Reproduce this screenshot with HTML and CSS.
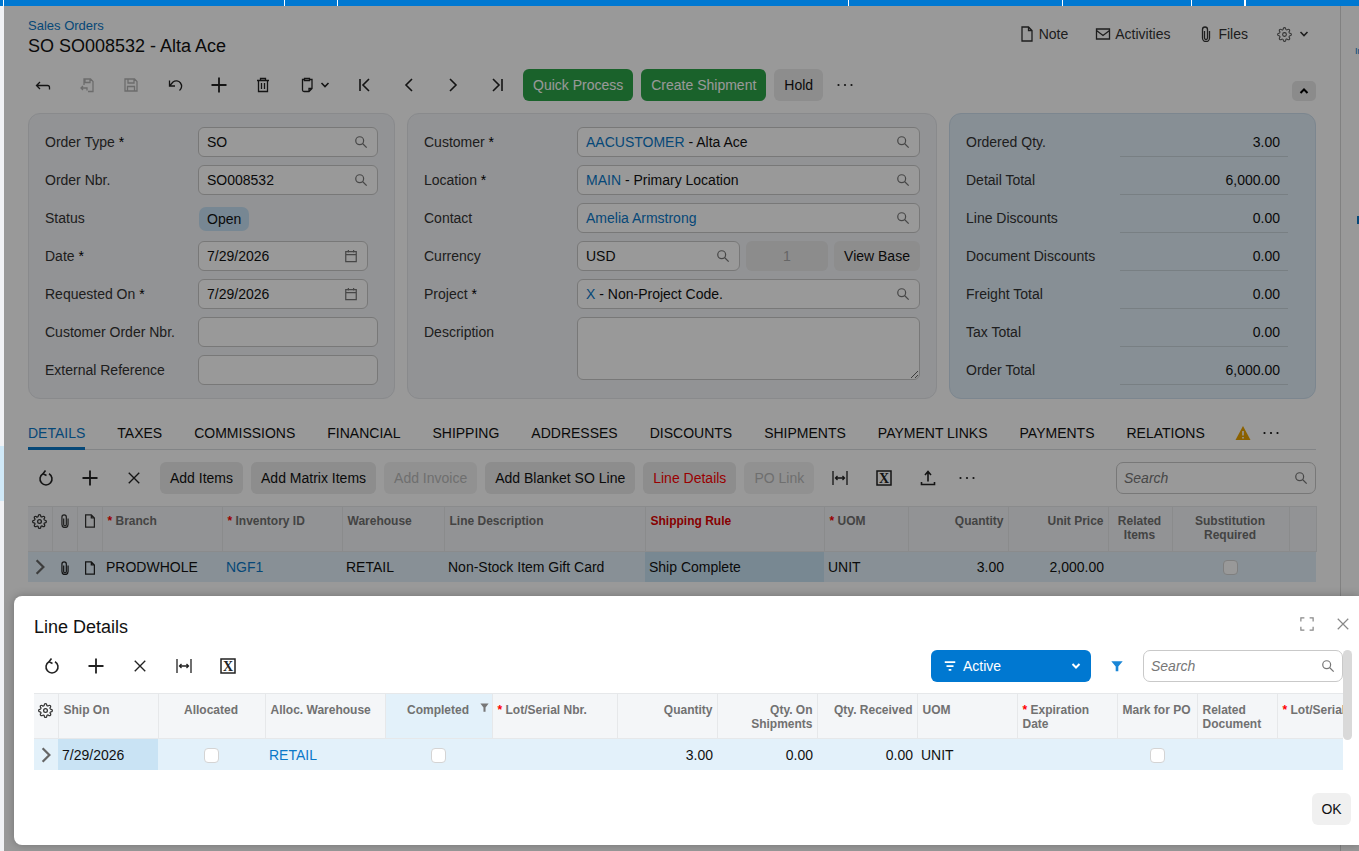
FILE: index.html
```html
<!DOCTYPE html>
<html lang="en">
<head>
    <meta charset="UTF-8">
    <title>SO SO008532 - Alta Ace</title>
    <link rel="stylesheet" href="styles.css">
</head>
<body>
    <svg class="sprite" xmlns="http://www.w3.org/2000/svg">
        <symbol id="i-back" viewBox="0 0 16 16"><path d="M14.5 12.5v-2a2 2 0 0 0-2-2h-11M5 5 1.5 8.5 5 12"/></symbol>
        <symbol id="i-saveback" viewBox="0 0 16 16"><path d="M5 8V2h6.5L14 4.5V14.5H9M6 2v3.5h5V2M2 11h6v2.5M4 9l-2 2 2 2"/></symbol>
        <symbol id="i-save" viewBox="0 0 16 16"><path d="M2 2h9.5L14 4.5V14H2zM5 2v4h6V2M4.5 14V9.5h7V14"/></symbol>
        <symbol id="i-undo" viewBox="0 0 16 16"><path d="M2.5 3.5V9H8M2.5 9l3.5-4a5 5 0 1 1 6.5 8.5"/></symbol>
        <symbol id="i-plus" viewBox="0 0 16 16"><path d="M8 .5v15M.5 8h15"/></symbol>
        <symbol id="i-trash" viewBox="0 0 16 16"><path d="M2 3.5h12M5.5 3.5V1.5h5v2M3.5 3.5V14.5h9V3.5M6.5 6v6M9.5 6v6"/></symbol>
        <symbol id="i-paste" viewBox="0 0 16 16"><path d="M5.5 2.5H3.5V13a1.5 1.5 0 0 0 1.5 1.5h5l3-3V2.5h-2M5.5 1.5h5v2h-5zM10 14.5v-3h3"/></symbol>
        <symbol id="i-first" viewBox="0 0 16 16"><path d="M3 2v12M12 2 6 8l6 6"/></symbol>
        <symbol id="i-prev" viewBox="0 0 16 16"><path d="M11 2 5 8l6 6"/></symbol>
        <symbol id="i-next" viewBox="0 0 16 16"><path d="m5 2 6 6-6 6"/></symbol>
        <symbol id="i-last" viewBox="0 0 16 16"><path d="M13 2v12M4 2l6 6-6 6"/></symbol>
        <symbol id="i-dots" viewBox="0 0 16 16"><circle cx="1.5" cy="8" r="1.1" fill="currentColor" stroke="none"/><circle cx="8" cy="8" r="1.1" fill="currentColor" stroke="none"/><circle cx="14.5" cy="8" r="1.1" fill="currentColor" stroke="none"/></symbol>
        <symbol id="i-chev-down" viewBox="0 0 10 10"><path d="m1.5 3 3.5 3.5L8.5 3"/></symbol>
        <symbol id="i-chev-up" viewBox="0 0 10 10"><path d="M1.5 7 5 3.5 8.5 7"/></symbol>
        <symbol id="i-search" viewBox="0 0 16 16"><circle cx="6.5" cy="6.5" r="4.5"/><path d="m10 10 4.5 4.5"/></symbol>
        <symbol id="i-cal" viewBox="0 0 16 16"><path d="M2 3h12v11.5H2zM2 6.5h12M5 1v3M11 1v3"/></symbol>
        <symbol id="i-note" viewBox="0 0 16 16"><path d="M3 1h6.5L13 4.5V15H3zM9.5 1v3.5H13"/></symbol>
        <symbol id="i-mail" viewBox="0 0 16 16"><path d="M1.5 3h13v10h-13zM1.5 4.5 8 9.5l6.5-5"/></symbol>
        <symbol id="i-clip" viewBox="0 0 16 16"><path d="M6.5 5v7a1.5 1.5 0 0 0 3 0V3.5a2.5 2.5 0 0 0-5 0v8.500a3.5 3.5 0 0 0 7 0V5"/></symbol>
        <symbol id="i-gear" viewBox="0 0 24 24"><circle cx="12" cy="12" r="3"/><path d="M19.4 15a1.65 1.65 0 0 0 .33 1.82l.06.06a2 2 0 0 1 0 2.83 2 2 0 0 1-2.83 0l-.06-.06a1.65 1.65 0 0 0-1.82-.33 1.65 1.65 0 0 0-1 1.51V21a2 2 0 0 1-2 2 2 2 0 0 1-2-2v-.09A1.65 1.65 0 0 0 9 19.4a1.65 1.65 0 0 0-1.82.33l-.06.06a2 2 0 0 1-2.83 0 2 2 0 0 1 0-2.83l.06-.06a1.65 1.65 0 0 0 .33-1.82 1.65 1.65 0 0 0-1.51-1H3a2 2 0 0 1-2-2 2 2 0 0 1 2-2h.09A1.65 1.65 0 0 0 4.6 9a1.65 1.65 0 0 0-.33-1.82l-.06-.06a2 2 0 0 1 0-2.83 2 2 0 0 1 2.83 0l.06.06a1.65 1.65 0 0 0 1.82.33H9a1.65 1.65 0 0 0 1-1.51V3a2 2 0 0 1 2-2 2 2 0 0 1 2 2v.09a1.65 1.65 0 0 0 1 1.51 1.65 1.65 0 0 0 1.82-.33l.06-.06a2 2 0 0 1 2.83 0 2 2 0 0 1 0 2.83l-.06.06a1.65 1.65 0 0 0-.33 1.82V9a1.65 1.65 0 0 0 1.51 1H21a2 2 0 0 1 2 2 2 2 0 0 1-2 2h-.09a1.65 1.65 0 0 0-1.51 1z"/></symbol>
        <symbol id="i-refresh" viewBox="0 0 16 16"><path d="M5 3.8a6 6 0 1 0 6 0M7.5.5 5 3.8 8.5 5.5"/></symbol>
        <symbol id="i-x" viewBox="0 0 16 16"><path d="m2 2 12 12M14 2 2 14"/></symbol>
        <symbol id="i-fit" viewBox="0 0 16 16"><path d="M1 1v14M15 1v14M3.5 8h9M5.5 6l-2 2 2 2M10.5 6l2 2-2 2"/></symbol>
        <symbol id="i-upload" viewBox="0 0 16 16"><path d="M8 11.5V2M5 5l3-3.5L11 5M1.5 12v2.5h13V12"/></symbol>
        <symbol id="i-expand" viewBox="0 0 16 16"><path d="M1 5V1h4M11 1h4v4M15 11v4h-4M5 15H1v-4"/></symbol>
        <symbol id="i-excel" viewBox="0 0 16 16"><rect x="1" y="1" width="14" height="14"/><text x="8" y="12.8" text-anchor="middle" font-family="Liberation Serif" font-size="14" font-weight="bold" fill="currentColor" stroke="none">X</text></symbol>
        <symbol id="i-lines" viewBox="0 0 16 16"><path d="M2 3.5h12M4 8h8M6.5 12.5h3"/></symbol>
    </svg>

    <div class="topbar">
        <span class="seg seg-a"></span>
        <span class="seg seg-b"></span>
        <span class="seg seg-c"></span>
        <span class="seg seg-d"></span>
        <span class="seg seg-e"></span>
        <span class="seg seg-f"></span>
        <span class="seg seg-g"></span>
        <span class="seg seg-h"></span>
    </div>

    <div class="shell">
        <div class="edge"><span class="edge-item"></span></div>

        <main class="page">
            <header class="page-head">
                <div>
                    <a class="crumb">Sales Orders</a>
                    <h1 class="page-title">SO SO008532 - Alta Ace</h1>
                </div>
                <nav class="head-links">
                    <span class="head-link link-note"><svg class="ic"><use href="#i-note"/></svg>Note</span>
                    <span class="head-link link-act"><svg class="ic"><use href="#i-mail"/></svg>Activities</span>
                    <span class="head-link"><svg class="ic"><use href="#i-clip"/></svg>Files</span>
                    <span class="head-link head-gear"><svg class="ic gear-ic"><use href="#i-gear"/></svg><svg class="chev"><use href="#i-chev-down"/></svg></span>
                </nav>
            </header>

            <div class="toolbar main-toolbar">
                <span class="icon-btn"><svg class="ic"><use href="#i-back"/></svg></span>
                <span class="icon-btn off"><svg class="ic"><use href="#i-saveback"/></svg></span>
                <span class="icon-btn off"><svg class="ic"><use href="#i-save"/></svg></span>
                <span class="icon-btn"><svg class="ic"><use href="#i-undo"/></svg></span>
                <span class="icon-btn"><svg class="ic ic-plus"><use href="#i-plus"/></svg></span>
                <span class="icon-btn"><svg class="ic"><use href="#i-trash"/></svg></span>
                <span class="icon-btn paste-btn"><svg class="ic"><use href="#i-paste"/></svg><svg class="chev"><use href="#i-chev-down"/></svg></span>
                <span class="icon-btn"><svg class="ic ic-nav"><use href="#i-first"/></svg></span>
                <span class="icon-btn"><svg class="ic ic-nav"><use href="#i-prev"/></svg></span>
                <span class="icon-btn"><svg class="ic ic-nav"><use href="#i-next"/></svg></span>
                <span class="icon-btn"><svg class="ic ic-nav"><use href="#i-last"/></svg></span>
                <button class="btn btn-green first-btn">Quick Process</button>
                <button class="btn btn-green">Create Shipment</button>
                <button class="btn">Hold</button>
                <span class="icon-btn"><svg class="ic"><use href="#i-dots"/></svg></span>
                <span class="collapse-btn"><svg class="chev"><use href="#i-chev-up"/></svg></span>
            </div>

            <section class="panels">
                <div class="panel">
                    <div class="row"><label class="lbl">Order Type <b>*</b></label><div class="field"><span>SO</span><svg class="ic-s"><use href="#i-search"/></svg></div></div>
                    <div class="row"><label class="lbl">Order Nbr.</label><div class="field"><span>SO008532</span><svg class="ic-s"><use href="#i-search"/></svg></div></div>
                    <div class="row"><label class="lbl">Status</label><span class="pill">Open</span></div>
                    <div class="row"><label class="lbl">Date <b>*</b></label><div class="field field-date"><span>7/29/2026</span><svg class="ic-s"><use href="#i-cal"/></svg></div></div>
                    <div class="row"><label class="lbl">Requested On <b>*</b></label><div class="field field-date"><span>7/29/2026</span><svg class="ic-s"><use href="#i-cal"/></svg></div></div>
                    <div class="row"><label class="lbl">Customer Order Nbr.</label><div class="field"></div></div>
                    <div class="row"><label class="lbl">External Reference</label><div class="field"></div></div>
                </div>

                <div class="panel">
                    <div class="row"><label class="lbl">Customer <b>*</b></label><div class="field"><span><a class="link">AACUSTOMER</a> - Alta Ace</span><svg class="ic-s"><use href="#i-search"/></svg></div></div>
                    <div class="row"><label class="lbl">Location <b>*</b></label><div class="field"><span><a class="link">MAIN</a> - Primary Location</span><svg class="ic-s"><use href="#i-search"/></svg></div></div>
                    <div class="row"><label class="lbl">Contact</label><div class="field"><span><a class="link">Amelia Armstrong</a></span><svg class="ic-s"><use href="#i-search"/></svg></div></div>
                    <div class="row">
                        <label class="lbl">Currency</label>
                        <div class="currency">
                            <div class="field"><span>USD</span><svg class="ic-s"><use href="#i-search"/></svg></div>
                            <div class="rate">1</div>
                            <button class="btn view-base">View Base</button>
                        </div>
                    </div>
                    <div class="row"><label class="lbl">Project <b>*</b></label><div class="field"><span><a class="link">X</a> - Non-Project Code.</span><svg class="ic-s"><use href="#i-search"/></svg></div></div>
                    <div class="row row-top"><label class="lbl">Description</label><textarea class="area"></textarea></div>
                </div>

                <div class="panel panel-blue">
                    <div class="row"><label class="lbl">Ordered Qty.</label><div class="amount">3.00</div></div>
                    <div class="row"><label class="lbl">Detail Total</label><div class="amount">6,000.00</div></div>
                    <div class="row"><label class="lbl">Line Discounts</label><div class="amount">0.00</div></div>
                    <div class="row"><label class="lbl">Document Discounts</label><div class="amount">0.00</div></div>
                    <div class="row"><label class="lbl">Freight Total</label><div class="amount">0.00</div></div>
                    <div class="row"><label class="lbl">Tax Total</label><div class="amount">0.00</div></div>
                    <div class="row"><label class="lbl">Order Total</label><div class="amount">6,000.00</div></div>
                </div>
            </section>

            <div class="tabs">
                <span class="tab active">DETAILS</span>
                <span class="tab">TAXES</span>
                <span class="tab">COMMISSIONS</span>
                <span class="tab">FINANCIAL</span>
                <span class="tab">SHIPPING</span>
                <span class="tab">ADDRESSES</span>
                <span class="tab">DISCOUNTS</span>
                <span class="tab">SHIPMENTS</span>
                <span class="tab">PAYMENT LINKS</span>
                <span class="tab">PAYMENTS</span>
                <span class="tab">RELATIONS</span>
                <svg class="warn" viewBox="0 0 16 16"><path d="M8 1 15.5 15H.5z"/><path class="warn-mark" d="M8 6v4.5M8 12v1.5"/></svg>
                <svg class="ic tab-dots"><use href="#i-dots"/></svg>
            </div>

            <div class="toolbar grid-toolbar">
                <span class="icon-btn"><svg class="ic ic-bold"><use href="#i-refresh"/></svg></span>
                <span class="icon-btn"><svg class="ic ic-plus"><use href="#i-plus"/></svg></span>
                <span class="icon-btn"><svg class="ic ic-x"><use href="#i-x"/></svg></span>
                <button class="btn first-btn">Add Items</button>
                <button class="btn">Add Matrix Items</button>
                <button class="btn btn-off">Add Invoice</button>
                <button class="btn">Add Blanket SO Line</button>
                <button class="btn btn-red">Line Details</button>
                <button class="btn btn-off">PO Link</button>
                <span class="icon-btn after-btn"><svg class="ic"><use href="#i-fit"/></svg></span>
                <span class="icon-btn"><svg class="ic ic-xl"><use href="#i-excel"/></svg></span>
                <span class="icon-btn"><svg class="ic ic-bold"><use href="#i-upload"/></svg></span>
                <span class="icon-btn narrow"><svg class="ic"><use href="#i-dots"/></svg></span>
                <div class="search"><i>Search</i><svg class="ic-s"><use href="#i-search"/></svg></div>
            </div>

            <table class="grid grid-main">
                <colgroup>
                    <col class="c24"><col class="c25"><col class="c25"><col class="c120"><col class="c120"><col class="c102"><col class="c201"><col class="c179"><col class="c84"><col class="c100"><col class="c100"><col class="c64"><col class="c117"><col class="c27">
                </colgroup>
                <thead>
                    <tr>
                        <th class="ctr icon-th"><svg class="th-gear"><use href="#i-gear"/></svg></th>
                        <th class="ctr icon-th"><svg class="ic-s th-ic"><use href="#i-clip"/></svg></th>
                        <th class="ctr icon-th"><svg class="ic-s th-ic"><use href="#i-note"/></svg></th>
                        <th><em>*</em> Branch</th>
                        <th><em>*</em> Inventory ID</th>
                        <th>Warehouse</th>
                        <th>Line Description</th>
                        <th class="th-red">Shipping Rule</th>
                        <th><em>*</em> UOM</th>
                        <th class="num">Quantity</th>
                        <th class="num">Unit Price</th>
                        <th class="ctr">Related Items</th>
                        <th class="ctr">Substitution Required</th>
                        <th></th>
                    </tr>
                </thead>
                <tbody>
                    <tr>
                        <td class="ctr icon-td"><svg class="row-arrow"><use href="#i-next"/></svg></td>
                        <td class="ctr icon-td"><svg class="ic-s td-ic"><use href="#i-clip"/></svg></td>
                        <td class="ctr icon-td"><svg class="ic-s td-ic"><use href="#i-note"/></svg></td>
                        <td>PRODWHOLE</td>
                        <td><a class="link">NGF1</a></td>
                        <td>RETAIL</td>
                        <td>Non-Stock Item Gift Card</td>
                        <td class="cell-sel">Ship Complete</td>
                        <td>UNIT</td>
                        <td class="num">3.00</td>
                        <td class="num">2,000.00</td>
                        <td></td>
                        <td class="ctr"><span class="check"></span></td>
                        <td></td>
                    </tr>
                </tbody>
            </table>
        </main>

        <aside class="side">
            <span class="side-text">In</span>
            <span class="side-mark"></span>
        </aside>
    </div>

    <div class="dim"></div>

    <div class="modal">
        <div class="modal-head">
            <h2 class="modal-title">Line Details</h2>
            <svg class="ic-s modal-ic"><use href="#i-expand"/></svg>
            <svg class="ic-s modal-ic"><use href="#i-x"/></svg>
        </div>

        <div class="toolbar modal-toolbar">
            <span class="icon-btn"><svg class="ic ic-bold"><use href="#i-refresh"/></svg></span>
            <span class="icon-btn"><svg class="ic ic-plus"><use href="#i-plus"/></svg></span>
            <span class="icon-btn"><svg class="ic ic-x"><use href="#i-x"/></svg></span>
            <span class="icon-btn"><svg class="ic"><use href="#i-fit"/></svg></span>
            <span class="icon-btn"><svg class="ic ic-xl"><use href="#i-excel"/></svg></span>
            <div class="filter-drop">
                <svg class="ic-s"><use href="#i-lines"/></svg>
                <span>Active</span>
                <svg class="chev"><use href="#i-chev-down"/></svg>
            </div>
            <svg class="funnel" viewBox="0 0 16 16"><path d="M1.5 2.5h13L9.5 8.5V14h-3V8.5z"/></svg>
            <div class="search modal-search"><i>Search</i><svg class="ic-s"><use href="#i-search"/></svg></div>
        </div>

        <div class="grid-clip">
            <table class="grid grid-modal">
                <colgroup>
                    <col class="c24"><col class="c100"><col class="c107"><col class="c120"><col class="c107"><col class="c125"><col class="c100"><col class="c100"><col class="c100"><col class="c100"><col class="c100"><col class="c80"><col class="c80"><col class="c100">
                </colgroup>
                <thead>
                    <tr>
                        <th class="ctr icon-th"><svg class="th-gear"><use href="#i-gear"/></svg></th>
                        <th>Ship On</th>
                        <th class="ctr">Allocated</th>
                        <th>Alloc. Warehouse</th>
                        <th class="ctr th-filter">Completed <svg class="th-funnel" viewBox="0 0 16 16"><path d="M2 2h12L9.5 8v6h-3V8z"/></svg></th>
                        <th><em>*</em> Lot/Serial Nbr.</th>
                        <th class="num">Quantity</th>
                        <th class="num">Qty. On Shipments</th>
                        <th class="num">Qty. Received</th>
                        <th>UOM</th>
                        <th><em>*</em> Expiration Date</th>
                        <th class="tight">Mark for PO</th>
                        <th>Related Document</th>
                        <th class="nowrap"><em>*</em> Lot/Serial Nbr.</th>
                    </tr>
                </thead>
                <tbody>
                    <tr>
                        <td class="ctr icon-td"><svg class="row-arrow"><use href="#i-next"/></svg></td>
                        <td class="cell-sel">7/29/2026</td>
                        <td class="ctr"><span class="check"></span></td>
                        <td><a class="link">RETAIL</a></td>
                        <td class="ctr"><span class="check"></span></td>
                        <td></td>
                        <td class="num">3.00</td>
                        <td class="num">0.00</td>
                        <td class="num">0.00</td>
                        <td>UNIT</td>
                        <td></td>
                        <td class="ctr"><span class="check"></span></td>
                        <td></td>
                        <td></td>
                    </tr>
                </tbody>
            </table>
        </div>

        <span class="scroll-thumb"></span>

        <div class="modal-foot">
            <button class="btn btn-ok">OK</button>
        </div>
    </div>
</body>
</html>
```

FILE: styles.css
```css
html, body {
    margin: 0;
    padding: 0;
    height: 100%;
    overflow: hidden;
}
body {
    position: relative;
    font-family: "Liberation Sans", Arial, sans-serif;
    font-size: 14px;
    color: #111;
    background-color: #fff;
}
.sprite {
    display: none;
}
svg {
    fill: none;
    stroke: currentColor;
    stroke-width: 1.3;
    flex: none;
}
.ic {
    width: 16px;
    height: 16px;
}
.ic-plus {
    stroke-width: 1.8;
}
.ic-nav {
    stroke-width: 1.6;
}
.ic-bold {
    stroke-width: 1.6;
}
.ic-s {
    width: 14px;
    height: 14px;
    color: #777;
    stroke-width: 1.4;
    flex: none;
}
.chev {
    width: 10px;
    height: 10px;
    stroke-width: 1.6;
}
.link {
    color: #0a78c8;
}

/* top bar */
.topbar {
    display: flex;
    height: 6px;
    background-color: #0078d1;
}
.seg {
    border-right: 1px solid #fff;
    box-sizing: border-box;
}
.seg-a { width: 4px; }
.seg-b { width: 281px; }
.seg-c { width: 53px; }
.seg-d { width: 511px; }
.seg-e { width: 214px; }
.seg-f { width: 129px; }
.seg-g { width: 53px; }

/* page under the dialog */
.shell {
    display: flex;
    height: 845px;
}
.edge {
    width: 4px;
    flex: none;
    padding-top: 440px;
    background-color: #f1f2f5;
}
.edge-item {
    display: block;
    height: 55px;
    background-color: #cfe8f7;
}
.page {
    flex: 1;
    min-width: 0;
    padding: 12px 24px 0;
    border-right: 1px solid #d8d8d8;
}
.side {
    width: 18px;
    flex: none;
    overflow: hidden;
}
.side-text {
    display: block;
    margin: 40px 0 0 14px;
    font-size: 9px;
    color: #0a78c8;
}
.side-mark {
    display: block;
    width: 3px;
    height: 8px;
    margin: 160px 0 0 16px;
    background-color: #0a78c8;
}

.page-head {
    display: flex;
    justify-content: space-between;
}
.crumb {
    display: block;
    font-size: 13px;
    line-height: 16px;
    color: #0a78c8;
}
.page-title {
    margin: 0;
    font-size: 18px;
    font-weight: normal;
    line-height: 25px;
    color: #111;
}
.head-links {
    display: flex;
    align-items: center;
    gap: 29px;
    height: 32px;
    padding-right: 7px;
    color: #333;
}
.head-link {
    display: flex;
    align-items: center;
    gap: 4px;
}
.link-note {
    margin-right: -2px;
}
.link-act {
    margin-right: -1px;
}
.head-gear {
    gap: 7px;
}
.gear-ic {
    width: 15px;
    height: 15px;
    color: #555;
    stroke-width: 1.7;
}

.toolbar {
    display: flex;
    align-items: center;
    height: 32px;
}
.main-toolbar {
    margin-top: 10px;
    margin-left: -7px;
}
.icon-btn {
    display: flex;
    align-items: center;
    justify-content: center;
    width: 44px;
    height: 32px;
    flex: none;
    color: #222;
}
.icon-btn.off {
    color: #b5b5b5;
}
.icon-btn.narrow {
    width: 34px;
}
.paste-btn {
    width: 58px;
    gap: 5px;
    padding-left: 1px;
    box-sizing: border-box;
}
.btn {
    height: 32px;
    margin-left: 8px;
    padding: 0 10px;
    border: none;
    border-radius: 6px;
    font-family: inherit;
    font-size: 14px;
    color: #111;
    background-color: #ebebeb;
    white-space: nowrap;
}
.first-btn {
    margin-left: 4px;
}
.btn-green {
    color: #fff;
    background-color: #2ca348;
}
.btn-off {
    color: #b9b9b9;
    background-color: #f2f2f2;
}
.btn-red {
    color: #f00;
}
.collapse-btn {
    display: flex;
    align-items: center;
    justify-content: center;
    align-self: flex-end;
    width: 24px;
    height: 20px;
    margin-left: auto;
    border-radius: 5px;
    background-color: #e8e8e8;
    color: #000;
}
.collapse-btn .chev {
    stroke-width: 2;
}

/* form panels */
.panels {
    display: grid;
    grid-template-columns: 367px 530px 367px;
    gap: 12px;
    margin-top: 12px;
}
.panel {
    padding: 13px 16px;
    border: 1px solid #e4e6ea;
    border-radius: 12px;
    background-color: #f3f5f8;
}
.panel-blue {
    border-color: #cfe0ee;
    background-color: #e1eef8;
}
.row {
    display: flex;
    align-items: center;
    height: 30px;
    margin-bottom: 8px;
}
.row:last-child {
    margin-bottom: 0;
}
.row-top {
    align-items: flex-start;
    height: auto;
}
.lbl {
    width: 153px;
    flex: none;
    line-height: 30px;
    color: #333;
}
.lbl b {
    font-weight: normal;
    color: #000;
}
.field {
    display: flex;
    align-items: center;
    justify-content: space-between;
    flex: 1;
    min-width: 0;
    height: 30px;
    box-sizing: border-box;
    padding: 0 9px 0 8px;
    border: 1px solid #c9c9c9;
    border-radius: 6px;
    background-color: #fff;
}
.field-date {
    flex: none;
    width: 170px;
}
.pill {
    margin: 2px 0 0 1px;
    padding: 0 8px;
    line-height: 24px;
    border-radius: 7px;
    background-color: #c6e2f5;
}
.currency {
    display: flex;
    flex: 1;
    gap: 6px;
}
.currency .field {
    flex: none;
    width: 163px;
}
.rate {
    width: 82px;
    line-height: 30px;
    text-align: center;
    border-radius: 6px;
    color: #aaa;
    background-color: #e9e9e9;
}
.view-base {
    flex: 1;
    height: 30px;
    margin: 0;
    padding: 0;
}
.area {
    flex: 1;
    height: 63px;
    box-sizing: border-box;
    margin: 0;
    border: 1px solid #c9c9c9;
    border-radius: 6px;
    background-color: #fff;
    resize: both;
}
.amount {
    flex: 1;
    height: 30px;
    box-sizing: border-box;
    margin: 0 11px 0 1px;
    padding-right: 8px;
    line-height: 30px;
    text-align: right;
    border-bottom: 1px solid #c9d4db;
}

/* tabs */
.tabs {
    display: flex;
    align-items: center;
    height: 33px;
    box-sizing: border-box;
    margin-top: 18px;
    border-bottom: 1px solid #d9dce0;
}
.tab {
    height: 33px;
    box-sizing: border-box;
    margin-right: 32px;
    line-height: 32px;
    color: #111;
}
.tab.active {
    border-bottom: 3px solid #0a78c8;
    color: #0a78c8;
}
.warn {
    width: 16px;
    height: 16px;
    margin: 0 8px 0 -2px;
    fill: #e8a200;
    stroke: none;
}
.warn-mark {
    stroke: #fff;
    stroke-width: 1.6;
}
.tab-dots {
    width: 24px;
    height: 16px;
}

/* grid toolbar */
.grid-toolbar {
    margin-top: 12px;
    margin-left: -4px;
}
.after-btn {
    margin-left: 4px;
}
.ic-x {
    width: 14px;
    height: 14px;
    stroke-width: 1.6;
}
.ic-xl {
    stroke-width: 1.5;
}
.search {
    display: flex;
    align-items: center;
    justify-content: space-between;
    width: 200px;
    height: 32px;
    box-sizing: border-box;
    margin-left: auto;
    padding: 0 7px;
    border: 1px solid #c9c9c9;
    border-radius: 7px;
    background-color: #fff;
    color: #777;
}

/* tables */
.grid {
    table-layout: fixed;
    border-collapse: collapse;
}
.c24 { width: 24px; }
.c25 { width: 25px; }
.c27 { width: 27px; }
.c64 { width: 64px; }
.c80 { width: 80px; }
.c84 { width: 84px; }
.c100 { width: 100px; }
.c102 { width: 102px; }
.c107 { width: 107px; }
.c117 { width: 117px; }
.c120 { width: 120px; }
.c125 { width: 125px; }
.c179 { width: 179px; }
.c201 { width: 201px; }
.grid-main {
    width: 1288px;
    margin-top: 12px;
}
.grid th {
    height: 45px;
    box-sizing: border-box;
    padding: 7px 6px 0 5px;
    vertical-align: top;
    text-align: left;
    font-size: 12px;
    line-height: 14px;
    font-weight: bold;
    color: #717171;
    background-color: #f4f6f8;
    border-top: 1px solid #e6e8ea;
    border-bottom: 1px solid #e6e8ea;
    border-right: 1px solid #e6e8ea;
}
.grid td {
    height: 30px;
    padding: 0 4px;
    background-color: #e3f1fa;
    white-space: nowrap;
}
.grid th.ctr, .grid td.ctr {
    text-align: center;
}
.grid th.num, .grid td.num {
    text-align: right;
}
.grid th.num {
    padding-right: 4px;
}
.grid th.icon-th, .grid td.icon-td {
    padding-left: 0;
    padding-right: 0;
}
.grid em {
    font-style: normal;
    color: #f00;
}
.grid th.th-red {
    color: #e00000;
}
.grid td.cell-sel {
    background-color: #c9e3f4;
}
.th-ic {
    color: #333;
}
.th-gear {
    width: 15px;
    height: 15px;
    color: #333;
    stroke-width: 2;
}
.td-ic {
    color: #222;
    vertical-align: middle;
}
.row-arrow {
    width: 18px;
    height: 18px;
    color: #666;
    stroke-width: 2;
    vertical-align: middle;
}
.check {
    display: inline-block;
    width: 15px;
    height: 15px;
    box-sizing: border-box;
    vertical-align: middle;
    border: 1px solid #d4d4d4;
    border-radius: 4px;
    background-color: #fff;
}

/* dialog */
.dim {
    position: absolute;
    top: 6px;
    left: 4px;
    right: 0;
    bottom: 0;
    background-color: rgba(0, 0, 0, 0.4);
}
.modal {
    position: absolute;
    top: 596px;
    left: 14px;
    right: 0;
    height: 249px;
    display: flex;
    flex-direction: column;
    box-sizing: border-box;
    padding: 19px 16px 0 20px;
    border-radius: 8px 0 0 8px;
    background-color: #fff;
    box-shadow: 0 0 8px rgba(0, 0, 0, 0.25);
}
.modal-head {
    display: flex;
    align-items: center;
    height: 24px;
    gap: 22px;
}
.modal-title {
    flex: 1;
    margin: 0;
    font-size: 18px;
    font-weight: normal;
    line-height: 24px;
    color: #111;
}
.modal-ic {
    color: #888;
    margin-bottom: 6px;
    transform: translateX(7px);
}
.modal-toolbar {
    margin-top: 11px;
    margin-left: -4px;
}
.filter-drop {
    display: flex;
    align-items: center;
    width: 160px;
    height: 32px;
    box-sizing: border-box;
    margin-left: auto;
    padding: 0 10px 0 12px;
    gap: 6px;
    border-radius: 6px;
    color: #fff;
    background-color: #0078d1;
    font-weight: 500;
}
.filter-drop span {
    flex: 1;
}
.filter-drop .ic-s {
    color: #fff;
    stroke-width: 2;
}
.filter-drop .chev {
    stroke-width: 2;
}
.funnel {
    width: 14px;
    height: 14px;
    margin: 0 19px;
    fill: #1a86d6;
    stroke: none;
}
.modal-search {
    margin-left: 0;
}
.grid-clip {
    margin-top: 11px;
    overflow: hidden;
}
.grid-modal {
    width: 1343px;
}
.grid-modal th {
    padding-top: 9px;
}
.grid th.th-filter {
    position: relative;
    background-color: #e3f1fa;
}
.th-funnel {
    position: absolute;
    top: 8px;
    right: 2px;
    width: 11px;
    height: 11px;
    fill: #777;
    stroke: none;
}
.grid th.tight {
    padding-right: 0;
}
.grid th.nowrap {
    white-space: nowrap;
}
.grid-modal td {
    height: 31px;
}
.scroll-thumb {
    position: absolute;
    top: 54px;
    right: 7px;
    width: 9px;
    height: 90px;
    border-radius: 5px;
    background-color: #d9d9d9;
}
.modal-foot {
    display: flex;
    justify-content: flex-end;
    margin-top: auto;
    margin-right: -8px;
    padding-bottom: 20px;
}
.btn-ok {
    width: 39px;
    margin: 0;
    padding: 0;
    background-color: #f0f0f0;
}
```
